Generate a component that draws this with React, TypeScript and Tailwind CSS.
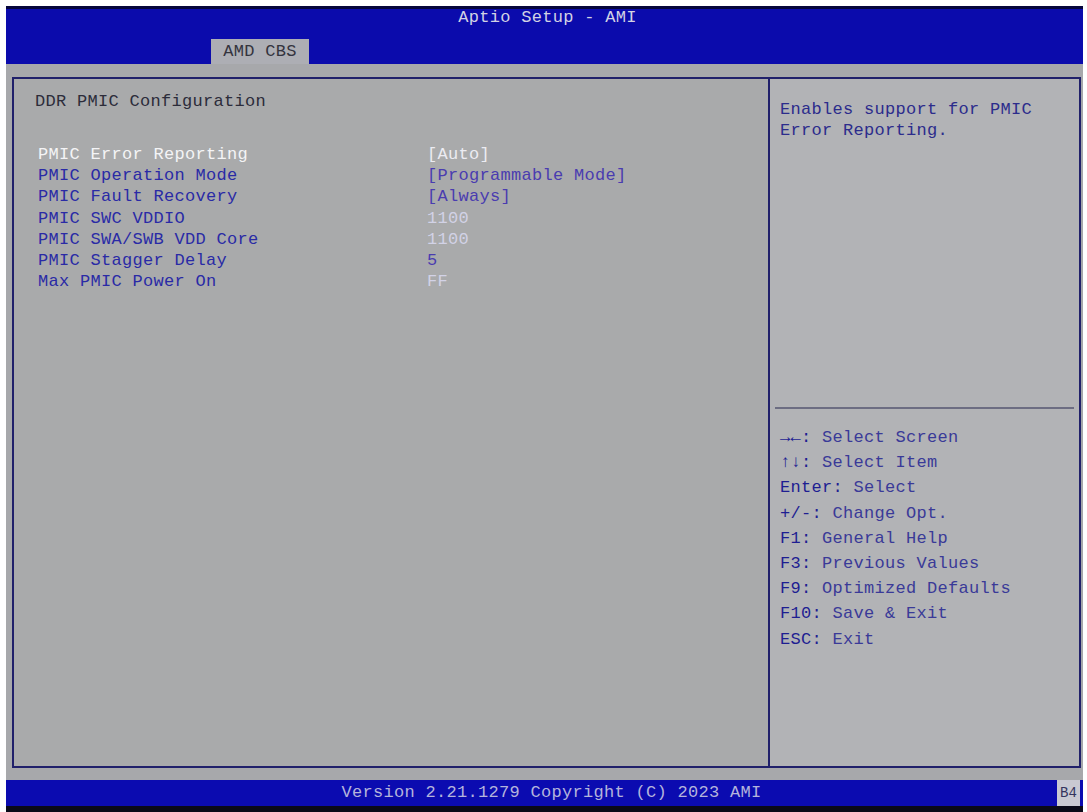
const items = [
  { label: "PMIC Error Reporting", value: "[Auto]", active: true },
  { label: "PMIC Operation Mode", value: "[Programmable Mode]" },
  { label: "PMIC Fault Recovery", value: "[Always]" },
  { label: "PMIC SWC VDDIO", value: "1100", plain: true },
  { label: "PMIC SWA/SWB VDD Core", value: "1100", plain: true },
  { label: "PMIC Stagger Delay", value: "5" },
  { label: "Max PMIC Power On", value: "FF", plain: true },
];

const keys = [
  ["→←", "Select Screen"],
  ["↑↓", "Select Item"],
  ["Enter", "Select"],
  ["+/-", "Change Opt."],
  ["F1", "General Help"],
  ["F3", "Previous Values"],
  ["F9", "Optimized Defaults"],
  ["F10", "Save & Exit"],
  ["ESC", "Exit"],
];

export default function App() {
  return (
    <div
      className="w-[1087px] h-[812px] bg-white pl-[6px] pr-[4px] pt-[6px] flex flex-col text-[17px] tracking-[0.3px] overflow-hidden"
      style={{ fontFamily: '"Liberation Mono", "DejaVu Sans Mono", monospace' }}
    >
      {/* Header */}
      <div className="h-[58px] bg-[#0b0bac] border-t-[3px] border-[#06063c] flex flex-col">
        <div className="h-[18px] flex items-center justify-center text-[#d2d2e4] pl-[6px]">
          Aptio Setup - AMI
        </div>
        <div className="flex-1 flex items-end pl-[205px]">
          <div className="w-[98px] h-[25px] bg-[#adaeb4] flex items-center justify-center text-[#34343e]">
            AMD CBS
          </div>
        </div>
      </div>

      {/* Body */}
      <div className="flex-1 bg-[#a7a8ab] pl-[6px] pr-[2px] pt-[13px] pb-[12px] flex">
        <div className="flex-1 border-2 border-[#20206a] flex">
          {/* Left panel */}
          <div className="w-[754px] bg-[#a9aaab] pl-[21px] pt-[12px]">
            <div className="leading-[21px] text-[#2c2c3a]">DDR PMIC Configuration</div>
            <div className="mt-[32px] pl-[3px]">
              {items.map((it, i) => (
                <div key={i} className="flex leading-[21.2px]">
                  <span
                    className={
                      "w-[389px] " + (it.active ? "text-[#f4f4f6]" : "text-[#2a2aa6]")
                    }
                  >
                    {it.label}
                  </span>
                  <span
                    className={
                      it.active
                        ? "text-[#ececf2]"
                        : it.plain
                        ? "text-[#d2d2e6]"
                        : "text-[#4a3cb0]"
                    }
                  >
                    {it.value}
                  </span>
                </div>
              ))}
            </div>
          </div>

          {/* Right panel */}
          <div className="flex-1 border-l-2 border-[#20206a] bg-[#b2b3b6] flex flex-col">
            <div className="h-[328px] pl-[10px] pt-[20px] text-[#2c2c8c] leading-[21px]">
              <div>Enables support for PMIC</div>
              <div>Error Reporting.</div>
            </div>
            <div className="mx-[5px] h-[2px] bg-[#6c6d82]" />
            <div className="pl-[10px] pt-[16px] leading-[25.2px]">
              {keys.map(([k, d], i) => (
                <div key={i} className="whitespace-pre">
                  <span className="text-[#1e1e92]">{k}:</span>
                  <span className="text-[#3a3a98]"> {d}</span>
                </div>
              ))}
            </div>
          </div>
        </div>
      </div>

      {/* Footer */}
      <div className="h-[26px] bg-[#0b0bb0] flex items-center">
        <div className="flex-1 text-center text-[#b4b4dc] pl-[40px]">
          Version 2.21.1279 Copyright (C) 2023 AMI
        </div>
        <div className="w-[23px] h-full bg-[#c9c9d2] text-[#34345e] text-[14px] tracking-normal flex items-center justify-center mr-[3px]">
          B4
        </div>
      </div>
      <div className="h-[6px] bg-[#0a0a18]" />
    </div>
  );
}
